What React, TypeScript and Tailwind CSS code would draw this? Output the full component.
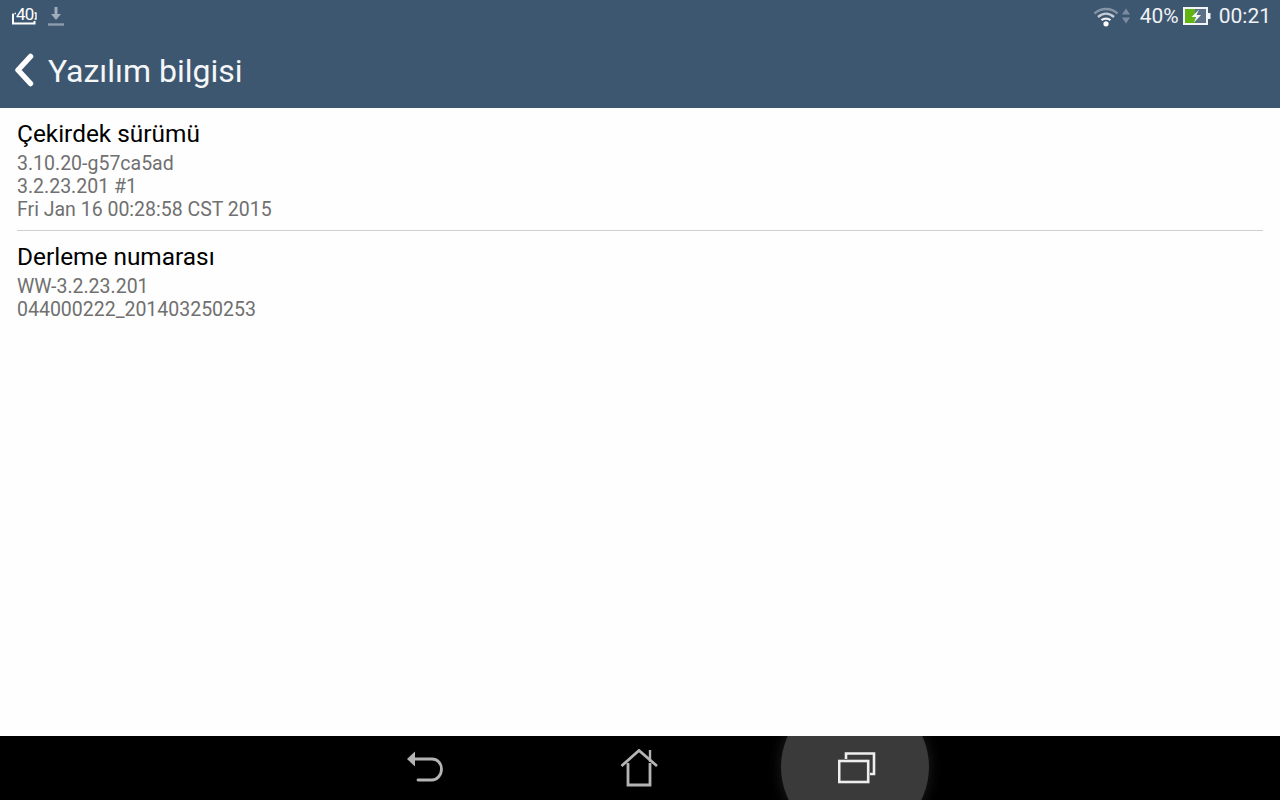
const font = { fontFamily: "Roboto, sans-serif" };

const StatusLeft = () => (
  <div className="flex items-center gap-[11px]">
    {/* Battery level notification */}
    <div className="relative h-[20px] w-[25px]">
      <svg width="25" height="20" viewBox="0 0 25 20" fill="none" className="absolute inset-0">
        <path d="M1 8v9.5h21.5V15" stroke="#fff" strokeWidth="2" />
        <path d="M1 9V7.5M4 7.5H2.5" stroke="#fff" strokeWidth="1.5" />
        <path d="M22.5 7h1.5v6h-1.5" stroke="#fff" strokeWidth="1.4" />
      </svg>
      <span className="absolute left-[4px] top-[1px] text-[17px] leading-[15px] tracking-[-0.8px] text-white">40</span>
    </div>
    {/* Download finished */}
    <svg width="16" height="21" viewBox="0 0 16 21" fill="none">
      <path d="M8 1v8" stroke="#a0adbb" strokeWidth="3" />
      <path d="M3 8h10l-5 6z" fill="#a0adbb" />
      <path d="M0 18.5h16" stroke="#8f9dae" strokeWidth="2.4" />
    </svg>
  </div>
);

const StatusRight = () => (
  <div className="flex items-center">
    <svg width="26" height="22" viewBox="0 0 26 22" fill="none">
      <path d="M1.5 8.5C8 2.5 18 2.5 24.5 8.5" stroke="#8494a6" strokeWidth="2.4" />
      <path d="M5 12C10 7.5 16 7.5 21 12" stroke="#c6cdd6" strokeWidth="2.4" />
      <path d="M8.5 15.2C11 13 15 13 17.5 15.2" stroke="#eef0f3" strokeWidth="2.2" />
      <circle cx="13" cy="18.8" r="2.6" fill="#fff" />
    </svg>
    <svg width="8" height="18" viewBox="0 0 8 18" className="ml-[3px]">
      <path d="M4 1.5l4 6h-8z" fill="#7c8ca0" />
      <path d="M4 16.5L0 10.5h8z" fill="#7c8ca0" />
    </svg>
    <span className="ml-[10px] text-[21px] leading-[24px] text-[#f0f2f5]">40%</span>
    <svg width="28" height="20" viewBox="0 0 28 20" className="ml-[4px]">
      <rect x="1" y="2" width="23" height="16" fill="none" stroke="#f2f4f6" strokeWidth="2" />
      <rect x="2" y="3" width="10" height="14" fill="#62b412" />
      <rect x="12" y="3" width="11" height="14" fill="#5b7086" />
      <rect x="24.5" y="7" width="3" height="6" fill="#f2f4f6" />
      <path d="M16 3.5L8.5 11h4.5l-2 5.5L18 9h-4.5z" fill="#f4f6f2" />
    </svg>
    <span className="ml-[8px] text-[21px] leading-[24px] text-[#f0f2f5]">00:21</span>
  </div>
);

const Row = ({ title, lines }: { title: string; lines: string[] }) => (
  <div>
    <div className="text-[24.4px] leading-[28px] text-black">{title}</div>
    <div className="mt-[4px] text-[19.5px] leading-[23px] text-[#707070]">
      {lines.map((line) => (
        <div key={line}>{line}</div>
      ))}
    </div>
  </div>
);

export default function App() {
  return (
    <div className="flex h-[800px] w-[1280px] flex-col overflow-hidden bg-white" style={font}>
      {/* Status + action bar */}
      <header className="h-[108px] bg-[#3e5770]">
        <div className="flex h-[32px] items-center justify-between pl-[12px] pr-[9px]">
          <StatusLeft />
          <StatusRight />
        </div>
        <div className="flex h-[76px] items-center pl-[14px]">
          <svg width="20" height="34" viewBox="0 0 20 34" fill="none">
            <path d="M16.5 3.5L4 17l12.5 13.5" stroke="#fff" strokeWidth="5.5" strokeLinecap="round" strokeLinejoin="round" />
          </svg>
          <h1 className="ml-[14px] pt-[2px] text-[32px] leading-[40px] text-[#f4f6f8]">Yazılım bilgisi</h1>
        </div>
      </header>

      {/* Settings list */}
      <main className="flex-1 bg-[#fefefe] pl-[17px] pr-[17px] pt-[12px]">
        <div className="border-b border-[#cfcfcf] pb-[9px]">
          <Row title="Çekirdek sürümü" lines={["3.10.20-g57ca5ad", "3.2.23.201 #1", "Fri Jan 16 00:28:58 CST 2015"]} />
        </div>
        <div className="pt-[12px]">
          <Row title="Derleme numarası" lines={["WW-3.2.23.201", "044000222_201403250253"]} />
        </div>
      </main>

      {/* Navigation bar */}
      <nav className="relative flex h-[64px] items-center justify-center overflow-hidden bg-black">
        <div className="absolute left-[781px] top-[-43px] h-[148px] w-[148px] rounded-full bg-[#3a3a3a] shadow-[0_0_14px_rgba(255,255,255,0.12)]" />
        <svg width="36" height="36" viewBox="0 0 36 36" fill="none" className="absolute left-[407px] top-[14px]">
          <path d="M0 9l8-7.5v15z" fill="#b4b4b4" />
          <path d="M8 9h17c5 0 9.5 4 9.5 10S30 30 25 30H11" stroke="#b4b4b4" strokeWidth="2.8" strokeLinecap="round" />
        </svg>
        <svg width="38" height="38" viewBox="0 0 38 38" fill="none" className="absolute left-[620px] top-[13px]">
          <path d="M1.5 17L19 1.5 37 17" stroke="#b4b4b4" strokeWidth="2.8" />
          <path d="M8 14v22h22V14" stroke="#b4b4b4" strokeWidth="2.8" />
          <path d="M30 1v12" stroke="#b4b4b4" strokeWidth="2.4" />
        </svg>
        <svg width="38" height="32" viewBox="0 0 38 32" fill="none" className="absolute left-[838px] top-[16px]">
          <rect x="1.2" y="9" width="29" height="21" stroke="#eeeeee" strokeWidth="2.6" />
          <path d="M8 7V1.5h28V22h-4" stroke="#eeeeee" strokeWidth="2.6" />
        </svg>
      </nav>
    </div>
  );
}
